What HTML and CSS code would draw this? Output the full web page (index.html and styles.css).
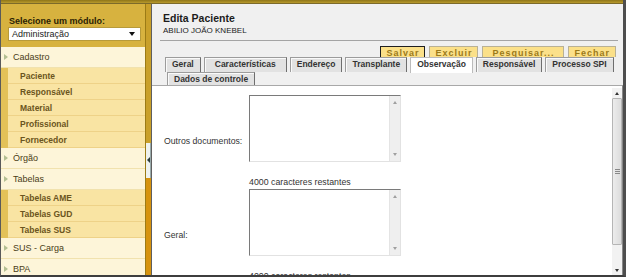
FILE: index.html
```html
<!DOCTYPE html>
<html lang="pt-BR">
<head>
    <meta charset="UTF-8">
    <title>Edita Paciente</title>
    <link rel="stylesheet" href="styles.css">
</head>
<body>
    <div class="window">
        <div class="topbar"></div>
        <div class="layout">
            <aside class="sidebar">
                <div class="sidebar__label">Selecione um módulo:</div>
                <div class="select">
                    <span class="select__value">Administração</span>
                </div>
                <ul class="menu">
                    <li class="menu__item">Cadastro</li>
                    <li class="menu__sub">
                        <div class="menu__subitem">Paciente</div>
                        <div class="menu__subitem">Responsável</div>
                        <div class="menu__subitem">Material</div>
                        <div class="menu__subitem">Profissional</div>
                        <div class="menu__subitem">Fornecedor</div>
                    </li>
                    <li class="menu__item">Órgão</li>
                    <li class="menu__item">Tabelas</li>
                    <li class="menu__sub">
                        <div class="menu__subitem">Tabelas AME</div>
                        <div class="menu__subitem">Tabelas GUD</div>
                        <div class="menu__subitem">Tabelas SUS</div>
                    </li>
                    <li class="menu__item">SUS - Carga</li>
                    <li class="menu__item">BPA</li>
                </ul>
            </aside>

            <div class="splitter">
                <div class="splitter__top"></div>
                <div class="splitter__handle"><span class="splitter__arrow"></span></div>
                <div class="splitter__bottom"></div>
            </div>

            <main class="panel">
                <h1 class="panel__title">Edita Paciente</h1>
                <div class="panel__subtitle">ABILIO JOÃO KNEBEL</div>
                <div class="panel__divider"></div>

                <div class="actions">
                    <button class="btn btn_focus">Salvar</button>
                    <button class="btn">Excluir</button>
                    <button class="btn btn_wide">Pesquisar...</button>
                    <button class="btn">Fechar</button>
                </div>

                <div class="tabs">
                    <div class="tabs__row">
                        <div class="tab">Geral</div>
                        <div class="tab tab_long">Características</div>
                        <div class="tab">Endereço</div>
                        <div class="tab">Transplante</div>
                        <div class="tab tab_active">Observação</div>
                        <div class="tab">Responsável</div>
                        <div class="tab">Processo SPI</div>
                    </div>
                    <div class="tabs__row tabs__row_second">
                        <div class="tab">Dados de controle</div>
                    </div>
                </div>

                <div class="content">
                    <div class="form">
                        <div class="form__row">
                            <label class="form__label">Outros documentos:</label>
                            <div class="form__field">
                                <div class="textbox">
                                    <textarea class="textbox__input"></textarea>
                                    <div class="textbox__scroll">
                                        <span class="arrow arrow_up"></span>
                                        <span class="arrow arrow_down"></span>
                                    </div>
                                </div>
                                <div class="form__counter">4000 caracteres restantes</div>
                            </div>
                        </div>
                        <div class="form__row">
                            <label class="form__label">Geral:</label>
                            <div class="form__field">
                                <div class="textbox">
                                    <textarea class="textbox__input"></textarea>
                                    <div class="textbox__scroll">
                                        <span class="arrow arrow_up"></span>
                                        <span class="arrow arrow_down"></span>
                                    </div>
                                </div>
                                <div class="form__counter">4000 caracteres restantes</div>
                            </div>
                        </div>
                    </div>
                    <div class="scrollbar">
                        <div class="scrollbar__btn"><span class="arrow arrow_up arrow_dark"></span></div>
                        <div class="scrollbar__thumb"><span class="scrollbar__grip"></span></div>
                        <div class="scrollbar__track"></div>
                        <div class="scrollbar__btn"><span class="arrow arrow_down arrow_dark"></span></div>
                    </div>
                </div>
            </main>
        </div>
    </div>
</body>
</html>
```

FILE: styles.css
```css
*{box-sizing:border-box}
body{margin:0;font-family:"Liberation Sans",Arial,sans-serif;color:#222}

.window{width:626px;height:277px;display:flex;flex-direction:column;border-left:1px solid #5a5a5a;border-right:3px solid #4e4e4e;border-bottom:2px solid #3e3e3e;overflow:hidden}
.topbar{height:4px;background:linear-gradient(#8f7518,#b89a2c);border-bottom:1px solid #7c6a2a}
.layout{flex:1;display:flex;min-height:0}

/* sidebar */
.sidebar{width:144px;background:#d7b23f;padding-top:12px;overflow:hidden}
.sidebar__label{padding-left:8px;font-size:9px;font-weight:700;line-height:11px;color:#2b2204}
.select{position:relative;margin:0 4px 0 7px;height:14px;background:#fff;border:1px solid #b79a3a}
.select__value{display:block;padding-left:3px;font-size:9px;line-height:12px;color:#222}
.select:after{content:'';position:absolute;right:5px;top:4px;border-top:4px solid #111;border-left:3px solid transparent;border-right:3px solid transparent}

.menu{list-style:none;margin:6px 0 0;padding:0}
.menu__item{position:relative;height:21px;line-height:21px;padding-left:12px;background:#fdf5d9;border-bottom:1px solid #f1e2ae;font-size:9px;color:#4a3d17}
.menu__item:before{content:'';position:absolute;left:3px;top:7px;border-left:4px solid #b4bf92;border-top:3px solid transparent;border-bottom:3px solid transparent}
.menu__sub{background:#e3c158;padding-left:7px}
.menu__subitem{height:16px;line-height:16px;padding-left:12px;background:#f9e4a3;border-bottom:1px solid #eed288;font-size:8.5px;font-weight:700;color:#6b5520}

/* splitter */
.splitter{width:7px;display:flex;flex-direction:column;border-left:1px solid #9b7b16;border-right:1px solid #5f5f5f}
.splitter__top{height:139px;background:#c9a02a}
.splitter__handle{height:35px;background:#eef2ef;border-right:1px solid #9aa;display:flex;align-items:center;justify-content:center;padding-bottom:2px}
.splitter__arrow{border-right:3px solid #2a3a3a;border-top:3px solid transparent;border-bottom:3px solid transparent}
.splitter__bottom{flex:1;background:#d6930e}

/* panel */
.panel{flex:1;display:flex;flex-direction:column;background:#f0f0f0;min-width:0}
.panel__title{margin:0;padding:8px 0 0 11px;font-size:10.5px;line-height:13px;font-weight:700;color:#1c1c1c}
.panel__subtitle{margin-top:1px;padding-left:11px;font-size:8px;line-height:10px;color:#222}
.panel__divider{height:1px;margin:4px 5px 0 8px;background:#a4a4a4}

.actions{height:11px;margin-top:5px;display:flex;justify-content:flex-end;gap:4px;padding-right:7px;overflow:hidden}
.btn{height:15px;padding:0 5px;background:#fbe089;border:1px solid #b9b195;font-family:inherit;font-size:9px;font-weight:700;letter-spacing:1px;line-height:11px;color:#9b7a1a}
.btn_focus{border-color:#1f1f1f}
.btn_wide{padding:0 9px}

.tabs__row{display:flex;gap:3px;padding-left:13px;height:15px;align-items:flex-end}
.tabs__row_second{height:13px;padding-left:15px}
.tab{flex-shrink:0;white-space:nowrap;height:100%;padding:0 6px;background:#e2e2e2;border:1px solid #9c9c9c;border-right-color:#6e6e6e;border-bottom:none;box-shadow:inset 1px 1px #fafafa;font-size:8.5px;font-weight:700;line-height:13px;color:#333}
.tabs__row_second .tab{line-height:12px}
.tab_long{padding:0 10px}
.tab_active{height:16px;background:#fff;border-color:#bbb;box-shadow:none;margin-bottom:-1px;position:relative}

.content{flex:1;display:flex;background:#fff;border-top:1px solid #a8a8a8;border-right:1px solid #888;min-height:0}
.form{flex:1;padding-top:9px}
.form__row{display:flex;align-items:center;padding-bottom:2px}
.form__label{width:97px;padding-left:12px;font-size:8.7px;color:#333}
.form__field{display:flex;flex-direction:column}
.form__counter{margin-top:15px;font-size:8.8px;line-height:10px;color:#333}

.textbox{display:flex;width:152px;height:67px;border:1px solid #e2e2e2;border-top-color:#7a7a7a;border-left-color:#7a7a7a}
.textbox__input{flex:1;border:none;resize:none;outline:0;padding:0;background:#fff}
.textbox__scroll{width:11px;display:flex;flex-direction:column;justify-content:space-between;align-items:center;padding:5px 0;background:#efefef;border-left:1px solid #e4e4e4}

.arrow{display:block;border-left:2.5px solid transparent;border-right:2.5px solid transparent}
.arrow_up{border-bottom:3px solid #a0a0a0}
.arrow_down{border-top:3px solid #a0a0a0}
.arrow_dark.arrow_up{border-bottom-color:#333}
.arrow_dark.arrow_down{border-top-color:#333}

.scrollbar{width:10px;margin:2px 0 0;display:flex;flex-direction:column;background:#f2f2f2}
.scrollbar__btn{height:10px;display:flex;align-items:center;justify-content:center}
.scrollbar__thumb{height:147px;display:flex;align-items:center;justify-content:center;background:linear-gradient(90deg,#ececec,#dcdcdc);border:1px solid #b5b5b5;border-radius:1px}
.scrollbar__grip{width:5px;height:5px;border-top:1px solid #888;border-bottom:1px solid #888;position:relative}
.scrollbar__grip:after{content:'';position:absolute;left:0;right:0;top:1px;border-top:1px solid #888}
.scrollbar__track{flex:1}
```
